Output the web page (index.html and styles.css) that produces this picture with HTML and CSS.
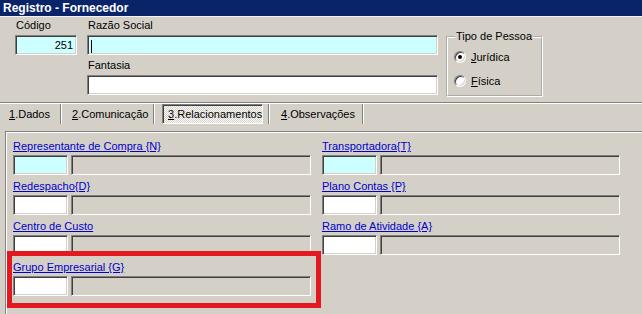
FILE: index.html
```html
<!DOCTYPE html>
<html lang="pt-BR">
<head>
  <meta charset="UTF-8" />
  <title>Registro - Fornecedor</title>
  <link rel="stylesheet" href="styles.css">
</head>
<body>

<div class="window">
  <div class="titlebar">Registro - Fornecedor</div>

  <div class="header">
    <div class="col-codigo">
      <span class="lbl">Código</span>
      <div class="edit cyan right">251</div>
    </div>
    <div class="col-razao">
      <span class="lbl">Razão Social</span>
      <div class="edit cyan"><span class="caret"></span></div>
      <span class="lbl next">Fantasia</span>
      <div class="edit"></div>
    </div>
    <fieldset class="group">
      <legend>Tipo de Pessoa</legend>
      <div class="radio-row"><span class="radio checked"></span><span><u>J</u>urídica</span></div>
      <div class="radio-row"><span class="radio"></span><span><u>F</u>ísica</span></div>
    </fieldset>
  </div>

  <div class="tabs">
    <div class="tab tab-dados"><u>1</u>.Dados</div>
    <div class="sep"></div>
    <div class="tab tab-comunicacao"><u>2</u>.Comunicação</div>
    <div class="sep"></div>
    <div class="tab tab-active"><u>3</u>.Relacionamentos</div>
    <div class="sep"></div>
    <div class="tab tab-obs"><u>4</u>.Observações</div>
    <div class="sep"></div>
  </div>

  <div class="page">
    <div class="col">
      <div class="field">
        <a class="link">Representante de Compra {N}</a>
        <div class="field-row"><div class="edit cyan code"></div><div class="edit desc"></div></div>
      </div>
      <div class="field">
        <a class="link">Redespacho{D}</a>
        <div class="field-row"><div class="edit code"></div><div class="edit desc"></div></div>
      </div>
      <div class="field">
        <a class="link">Centro de Custo</a>
        <div class="field-row"><div class="edit code"></div><div class="edit desc"></div></div>
      </div>
      <div class="field highlight">
        <a class="link">Grupo Empresarial {G}</a>
        <div class="field-row"><div class="edit code"></div><div class="edit desc"></div></div>
      </div>
    </div>
    <div class="col col-right">
      <div class="field">
        <a class="link">Transportadora{T}</a>
        <div class="field-row"><div class="edit cyan code"></div><div class="edit desc"></div></div>
      </div>
      <div class="field">
        <a class="link">Plano Contas {P}</a>
        <div class="field-row"><div class="edit code"></div><div class="edit desc"></div></div>
      </div>
      <div class="field">
        <a class="link">Ramo de Atividade {A}</a>
        <div class="field-row"><div class="edit code"></div><div class="edit desc"></div></div>
      </div>
    </div>
  </div>
</div>

</body>
</html>
```

FILE: styles.css
```css
body { margin: 0; background: #d4d0c8; font: 11px "Liberation Sans", Arial, sans-serif; color: #000; }
.window { width: 642px; height: 314px; overflow: hidden; }

.titlebar { height: 17px; box-sizing: border-box; padding: 1px 0 0 3px; background: #0a246a; color: #fff; font-size: 12px; font-weight: bold; line-height: 15px; border-bottom: 1px solid #f4f3ee; }

.header { height: 85px; box-sizing: border-box; padding: 2px 0 0 15px; display: flex; align-items: flex-start; }
.col-codigo { width: 62px; margin-right: 10px; }
.col-razao { width: 351px; }
.lbl { display: block; padding-left: 1px; line-height: 13px; margin-bottom: 3px; }
.lbl.next { margin-top: 4px; }

.edit { height: 20px; box-sizing: border-box; background: #fff; border: 1px solid; border-color: #808080 #fff #fff #808080; box-shadow: inset 1px 1px 0 #404040, inset -1px -1px 0 #d4d0c8; line-height: 18px; padding: 0 3px; }
.edit.cyan { background: #ccffff; }
.edit.right { text-align: right; }
.caret { display: inline-block; width: 1px; height: 13px; background: #000; vertical-align: middle; }

.group { margin: 11px 0 0 8px; padding: 6px 0 7px 6px; width: 97px; box-sizing: border-box; border: 2px groove #fff; min-width: 0; }
.group legend { margin-left: 1px; padding: 0 1px; line-height: 13px; }
.radio-row { display: flex; align-items: center; height: 15px; }
.radio-row + .radio-row { margin-top: 9px; }
.radio { width: 12px; height: 12px; box-sizing: border-box; margin-right: 5px; border-radius: 50%; background: #fff; border: 1px solid; border-color: #808080 #fff #fff #808080; box-shadow: inset 1px 1px 0 #404040, inset -1px -1px 0 #d4d0c8; display: flex; align-items: center; justify-content: center; }
.radio.checked::after { content: ""; width: 4px; height: 4px; border-radius: 50%; background: #000; }

.tabs { height: 29px; box-sizing: border-box; padding-top: 1px; border-top: 1px solid #808080; box-shadow: inset 0 1px 0 #fff; display: flex; align-items: flex-start; }
.tab { height: 20px; box-sizing: border-box; line-height: 20px; white-space: nowrap; }
.sep { height: 20px; border-left: 1px solid #808080; border-right: 1px solid #fff; }
.tab-dados { margin-left: 4px; width: 56px; padding-left: 5px; }
.tab-comunicacao { width: 91px; padding-left: 10px; }
.tab-active { margin: 0 5px 0 7px; width: 101px; padding-left: 5px; line-height: 18px; border: 1px solid; border-color: #808080 #fff #fff #808080; box-shadow: inset 1px 1px 0 #404040; background-color: #eceae5; background-image: repeating-conic-gradient(#fff 0 25%, #d4d0c8 0 50%); background-size: 2px 2px; }
.tab-obs { width: 92px; padding-left: 11px; }

.page { margin-left: 5px; height: 183px; box-sizing: border-box; padding: 8px 0 0 7px; border-top: 1px solid #808080; border-left: 1px solid #808080; box-shadow: inset 1px 1px 0 #fff; display: flex; gap: 11px; }
.col { width: 298px; }
.link { display: block; color: #0000cc; text-decoration: underline; line-height: 13px; margin-bottom: 2px; cursor: pointer; }
.field-row { display: flex; gap: 3px; margin-bottom: 5px; }
.code { width: 55px; }
.desc { flex: 1; background: #d4d0c8; }

.highlight { position: relative; z-index: 1; margin: -9px -10px 0 -6px; padding: 5px 5px 2px 1px; border: 5px solid #e3191f; }
```
